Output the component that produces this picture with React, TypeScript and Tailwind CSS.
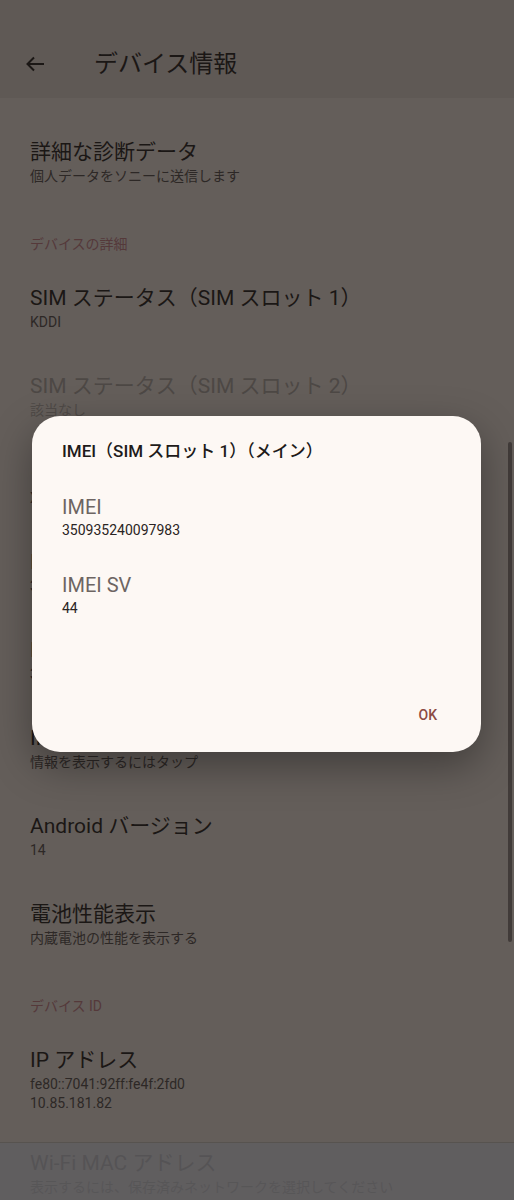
import React from "react";

const FONT = { fontFamily: "Roboto, 'Noto Sans CJK JP', 'Noto Sans', sans-serif" };

function Item({ title, subs, disabled }: { title: string; subs: string[]; disabled?: boolean }) {
  return (
    <div className="px-[30px] py-[20px]">
      <div className={`text-[21px] leading-[28px] ${disabled ? "text-[#4d4845]" : "text-[#1b1715]"}`}>{title}</div>
      {subs.map((s, i) => (
        <div key={i} className={`text-[14px] leading-[20px] ${disabled ? "text-[#4f4a47]" : "text-[#2d2826]"}`}>{s}</div>
      ))}
    </div>
  );
}

function Section({ label }: { label: string }) {
  return (
    <div className="px-[30px] pt-[28px] pb-[10px] text-[14px] leading-[20px] text-[#55393a]">{label}</div>
  );
}

export default function App() {
  return (
    <div style={FONT} className="relative w-[514px] h-[1200px] overflow-hidden bg-[#645e5a]">
      <div className="h-[98px] pt-[30px] bg-[#5f5955] flex items-center">
        <div className="w-[94px] flex items-center pl-[23px]">
          <svg width="24" height="24" viewBox="0 0 24 24" fill="none" stroke="#1b1715" strokeWidth="2" strokeLinecap="square">
            <path d="M20 12H5" />
            <path d="M11 5.5L4.5 12L11 18.5" strokeLinecap="butt" />
          </svg>
        </div>
        <div className="text-[24px] leading-[32px] text-[#1b1715]">デバイス情報</div>
      </div>
      <div className="pt-[20px]">
        <Item title="詳細な診断データ" subs={["個人データをソニーに送信します"]} />
        <Section label="デバイスの詳細" />
        <Item title="SIM ステータス（SIM スロット 1）" subs={["KDDI"]} />
        <Item title="SIM ステータス（SIM スロット 2）" subs={["該当なし"]} disabled />
        <Item title="モデル" subs={["XQ-DQ44"]} />
        <Item title="IMEI（SIM スロット 1）（メイン）" subs={["350935240097983"]} />
        <Item title="IMEI（SIM スロット 2）" subs={["350935240097991"]} />
        <Item title="IMS 登録ステータス" subs={["情報を表示するにはタップ"]} />
        <Item title="Android バージョン" subs={["14"]} />
        <Item title="電池性能表示" subs={["内蔵電池の性能を表示する"]} />
        <Section label="デバイス ID" />
        <div className="px-[30px] pt-[20px] pb-[17px]">
          <div className="text-[21px] leading-[28px] text-[#1b1715]">IP アドレス</div>
          <div className="text-[14px] leading-[20px] text-[#2d2826]">fe80::7041:92ff:fe4f:2fd0</div>
          <div className="text-[14px] leading-[18px] text-[#2d2826]">10.85.181.82</div>
        </div>
        <Item title="Wi-Fi MAC アドレス" subs={["表示するには、保存済みネットワークを選択してください"]} />
      </div>

      {/* bottom fade overlay */}
      <div className="absolute left-0 right-0 bottom-0 h-[58px] bg-[#5f5e60]/85 border-t border-[#57534f]" />

      {/* scrollbar */}
      <div className="absolute left-[508px] top-[442px] w-[4px] h-[500px] bg-[#413b39] rounded-full" />

      {/* dialog */}
      <div className="absolute left-[32px] top-[416px] w-[449px] h-[336px] rounded-[28px] bg-[#fdf8f4] shadow-[0_14px_40px_rgba(0,0,0,0.35)] flex flex-col">
        <div className="pl-[30px] pt-[23px] text-[17px] leading-[24px] font-medium text-[#201a19]">IMEI（SIM スロット 1）（メイン）</div>
        <div className="pl-[30px] pt-[31px]">
          <div className="text-[20px] leading-[26px] text-[#6d6562]">IMEI</div>
          <div className="text-[14px] leading-[20px] text-[#2a2423]">350935240097983</div>
        </div>
        <div className="pl-[30px] pt-[32px]">
          <div className="text-[20px] leading-[26px] text-[#6d6562]">IMEI SV</div>
          <div className="text-[14px] leading-[20px] text-[#2a2423]">44</div>
        </div>
        <div className="flex-1" />
        <div className="flex justify-end pr-[44px] pb-[27px]">
          <div className="text-[14px] leading-[20px] font-medium text-[#8c4a43]">OK</div>
        </div>
      </div>
    </div>
  );
}
